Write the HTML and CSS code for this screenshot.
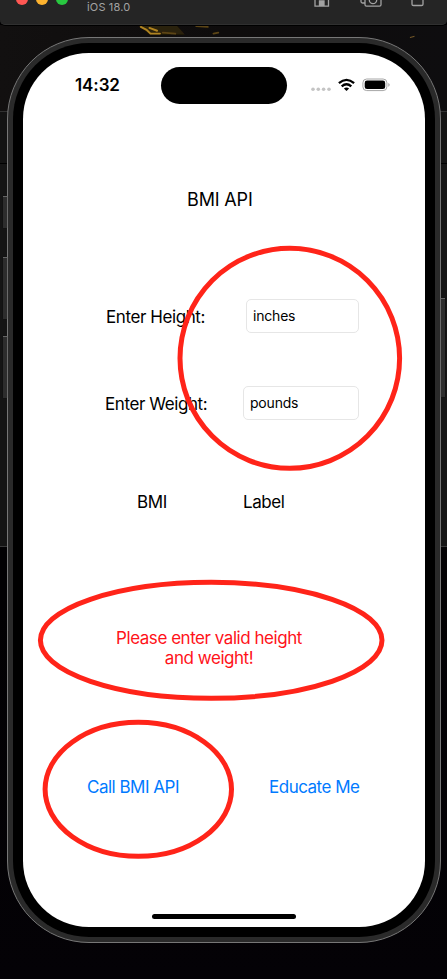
FILE: index.html
```html
<!DOCTYPE html>
<html lang="en">
<head>
<meta charset="utf-8">
<title>BMI API</title>
<link rel="stylesheet" href="styles.css">
</head>
<body>
<div class="desktop">
  <div class="backdrop">
    <div class="wallpaper-top">
      <svg width="447" height="90" viewBox="0 0 447 90">
        <defs><filter id="soft"><feGaussianBlur stdDeviation="0.8"/></filter></defs>
        <g filter="url(#soft)" fill="none" stroke-linecap="round">
          <path d="M133 0l42 1 8 9h-36z" fill="#2c2009"/>
          <path d="M137 2l6 3 4 4 10 0M146 3l8 3" stroke="#b08420" stroke-width="2"/>
          <path d="M160 8l13 1M195 1l12 1M213 9l5-1" stroke="#5c4514" stroke-width="2"/>
          <path d="M419 13l4-1" stroke="#80602a" stroke-width="1"/>
        </g>
      </svg>
    </div>
    <div class="panel-head"></div>
    <div class="panel-body"></div>
  </div>

  <header class="toolbar">
    <div class="lights"><i class="red"></i><i class="amber"></i><i class="green"></i></div>
    <span class="os">iOS 18.0</span>
    <svg class="tools" width="135" height="25" viewBox="312 0 135 25" fill="none" stroke="#a2a2a2" stroke-width="1.3">
      <path d="M315 -2V6.2H328.5V-2"/>
      <path d="M319.5 6V1H324V6" fill="#a2a2a2"/>
      <path d="M365 -2V4.8Q365 6.2 366.5 6.2H379.5Q381 6.2 381 4.8V-2M365 3H362.5Q361 3 361 1.5V-2"/>
      <circle cx="373" cy="0" r="3.7"/>
      <path d="M412 -2V4.2Q412 5.5 413.5 5.5H421.5Q423 5.5 423 4.2V-2"/>
    </svg>
  </header>

  <div class="phone">
    <i class="key action"></i><i class="key vol-up"></i><i class="key vol-down"></i><i class="key power"></i>
    <div class="bezel">
      <main class="screen">
        <div class="status">
          <span class="time">14:32</span>
          <span class="island"></span>
          <svg class="indicators" width="82" height="16" viewBox="310 77 82 16">
            <g fill="#c4c4c4"><circle cx="313" cy="89.2" r="1.8"/><circle cx="318.3" cy="89.2" r="1.8"/><circle cx="323.6" cy="89.2" r="1.8"/><circle cx="329" cy="89.2" r="1.8"/></g>
            <g fill="none" stroke="#000" stroke-width="2.3"><path d="M338.9 83.2Q346.5 76.6 354.1 83.2"/><path d="M341.7 86.4Q346.5 82.2 351.3 86.4"/></g>
            <path d="M346.5 91L343.9 88.5Q346.5 86.3 349.1 88.5Z"/>
            <rect x="362.9" y="79" width="24" height="11.6" rx="3.8" fill="none" stroke="#a6a6a6"/>
            <rect x="364.7" y="80.6" width="20.5" height="8.5" rx="2.3"/>
            <path d="M388.3 83Q389.7 83.5 389.7 84.8T388.3 86.7Z" fill="#a6a6a6"/>
          </svg>
        </div>
        <h1 class="title"><span>BMI API</span></h1>
        <div class="field height"><label for="height">Enter Height:</label><input id="height" type="text" value="inches"></div>
        <div class="field weight"><label for="weight">Enter Weight:</label><input id="weight" type="text" value="pounds"></div>
        <div class="result"><span class="bmi">BMI</span><span class="category">Label</span></div>
        <p class="error"><span class="line1">Please enter valid height</span><br><span class="line2">and weight!</span></p>
        <div class="actions"><button class="call">Call BMI API</button><button class="educate">Educate Me</button></div>
        <div class="home"></div>
      </main>
    </div>
  </div>

  <svg class="marks" width="447" height="979" viewBox="0 0 447 979" fill="none" stroke="#ff2419" stroke-width="5">
    <ellipse cx="289.8" cy="358.3" rx="109.8" ry="110"/>
    <ellipse cx="211.2" cy="640.3" rx="170.8" ry="58"/>
    <ellipse cx="138.3" cy="789.3" rx="93.2" ry="67"/>
  </svg>
</div>
</body>
</html>
```
FILE: styles.css
```css
* { box-sizing: border-box; }
body {
  margin: 0;
  background: #020104;
  font-family: Inter, "Liberation Sans", sans-serif;
  color: #000;
}
.desktop {
  position: relative;
  width: 447px;
  height: 979px;
  overflow: hidden;
}
.backdrop {
  position: absolute;
  inset: 0;
  display: flex;
  flex-direction: column;
  padding-top: 25px;
  background: linear-gradient(#020103 60%, #040206);
}
.wallpaper-top { height: 86px; background: linear-gradient(90deg, #121010, #0e0c0c 50%, #0e0d0f); }
.wallpaper-top svg { display: block; height: 86px; }
.panel-head { height: 52px; background: #131313; border-top: 1px solid #323232; }
.panel-body { height: 384px; background: #151515; border-top: 1px solid #000; border-bottom: 1px solid #3a3a3a; }

.toolbar {
  position: relative;
  display: flex;
  height: 25px;
  background: #252525;
  border-bottom: 1px solid #303030;
  border-radius: 0 0 5px 5px;
  box-shadow: 0 1px 0 #000;
}
.lights { display: flex; gap: 8px; margin: -7px 19px 0 16px; }
.lights i { width: 12px; height: 12px; border-radius: 50%; }
.red { background: #ff5753; }
.amber { background: #fdb32f; }
.green { background: #28c840; }
.os { width: 225px; font-size: 11px; line-height: 14px; color: #a3a3a3; letter-spacing: 0.15px; }
.tools { flex: none; }

.phone {
  position: relative;
  width: 434px;
  height: 906px;
  margin: 12px 0 0 7px;
  padding: 5px;
  background: #2a2a2a;
  border: 1px solid #777;
  border-radius: 82px;
}
.key {
  position: absolute;
  left: -5px;
  width: 4px;
  background: #2d2d2d;
  border-top: 1px solid #666;
  box-shadow: 0 0 1px #000;
}
.action { top: 158px; height: 32px; }
.vol-up { top: 219px; height: 62px; }
.vol-down { top: 298px; height: 62px; }
.power { left: 433px; top: 260px; height: 99px; }
.bezel { height: 894px; padding: 10px; background: #000; border-radius: 76px; }
.screen {
  display: flex;
  flex-direction: column;
  height: 874px;
  background: #fff;
  border-radius: 66px;
  font-size: 17px;
  line-height: 20px;
  letter-spacing: -0.42px;
}

.status { display: flex; align-items: center; height: 36px; margin-top: 14px; }
.time { width: 86px; margin-left: 52px; font-size: 17px; font-weight: 600; letter-spacing: -0.1px; }
.island { width: 126px; height: 37px; border-radius: 19px; background: #000; }
.indicators { margin-left: 23px; }

.title { margin: 87px 0 0 164px; font-size: 18px; font-weight: 400; line-height: 20px; letter-spacing: -0.15px; }
.field { display: flex; align-items: center; height: 34px; }
.field.height { margin: 89px 0 0 83px; }
.field.weight { margin: 53px 0 0 82px; }
.field label { width: 140px; padding-top: 2px; white-space: nowrap; }
.field.weight label { width: 138px; }
.field input {
  width: 113px;
  height: 34px;
  padding: 0 6px 1px;
  border: 1px solid #e6e6e6;
  border-radius: 5px;
  background: #fff;
  color: #000;
  font: 14px Inter, "Liberation Sans", sans-serif;
  letter-spacing: -0.2px;
}
.field.weight input { width: 116px; }
.result { display: flex; margin: 72px 0 0 114px; }
.bmi { width: 106px; }
.error { margin: 116px 30px 0 0; text-align: center; color: #ff1219; white-space: nowrap; letter-spacing: -0.46px; }
.actions { display: flex; margin: 109px 0 0 64px; }
.actions button {
  padding: 0;
  border: 0;
  background: none;
  color: #007aff;
  font: 17px/20px Inter, "Liberation Sans", sans-serif;
  letter-spacing: -0.5px;
  text-align: left;
  white-space: nowrap;
}
.call { width: 182px; }
.home { width: 144px; height: 5px; margin: auto auto 8px; border-radius: 3px; background: #000; }

.marks { position: absolute; inset: 0; pointer-events: none; }
```
